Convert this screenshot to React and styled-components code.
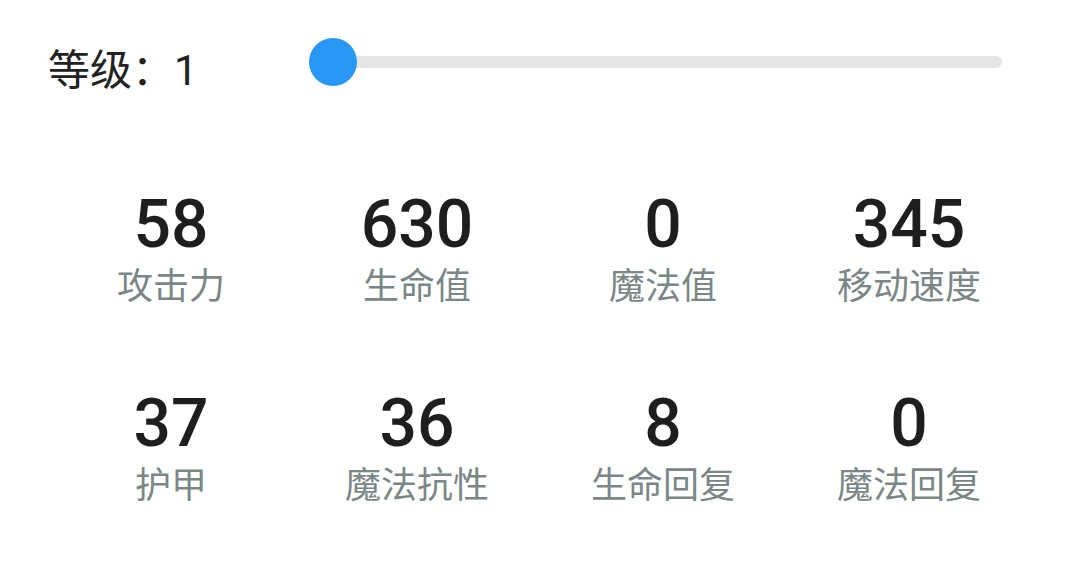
import React, { useState } from "react";
import styled, { createGlobalStyle } from "styled-components";

const Global = createGlobalStyle`
  html, body { margin: 0; padding: 0; background: #ffffff; }
  body { font-family: Roboto, "Noto Sans CJK SC", sans-serif; color: #222; }
`;

const Page = styled.div`
  width: 1080px;
  padding: 0 48px;
  box-sizing: border-box;
`;

const LevelRow = styled.div`
  display: flex;
  align-items: center;
  height: 62px;
  padding-top: 31px;
`;

const LevelLabel = styled.div`
  flex: 0 0 285px;
  padding-top: 14px;
  font-size: 42px;
  line-height: 48px;
  color: #222;
  font-family: "Noto Sans CJK SC", sans-serif;
  white-space: nowrap;
  span { font-family: Roboto, sans-serif; }
`;

const Track = styled.div`
  position: relative;
  flex: 0 0 669px;
  height: 12px;
  border-radius: 6px;
  background: #e5e5e5;
`;

const Thumb = styled.div`
  position: absolute;
  top: 50%;
  width: 48px;
  height: 48px;
  margin: -24px 0 0 -24px;
  border-radius: 50%;
  background: #2897f5;
`;

const Grid = styled.div`
  display: grid;
  grid-template-columns: repeat(4, 1fr);
  row-gap: 83px;
  margin-top: 99px;
`;

const Stat = styled.div`
  display: flex;
  flex-direction: column;
  align-items: center;
`;

const Value = styled.div`
  font-family: Roboto, sans-serif;
  font-weight: 500;
  font-size: 66px;
  line-height: 66px;
  color: #1e1e1e;
`;

const Name = styled.div`
  font-family: "Noto Sans CJK SC", sans-serif;
  font-size: 36px;
  line-height: 50px;
  color: #7b8787;
`;

const stats = [
  ["58", "攻击力"],
  ["630", "生命值"],
  ["0", "魔法值"],
  ["345", "移动速度"],
  ["37", "护甲"],
  ["36", "魔法抗性"],
  ["8", "生命回复"],
  ["0", "魔法回复"],
];

export default function App() {
  const [level] = useState(1);
  const pct = ((level - 1) / 17) * 100;
  return (
    <Page>
      <Global />
      <LevelRow>
        <LevelLabel>
          等级：<span>{level}</span>
        </LevelLabel>
        <Track>
          <Thumb style={{ left: `${pct}%` }} />
        </Track>
      </LevelRow>
      <Grid>
        {stats.map(([v, n], i) => (
          <Stat key={i}>
            <Value>{v}</Value>
            <Name>{n}</Name>
          </Stat>
        ))}
      </Grid>
    </Page>
  );
}
